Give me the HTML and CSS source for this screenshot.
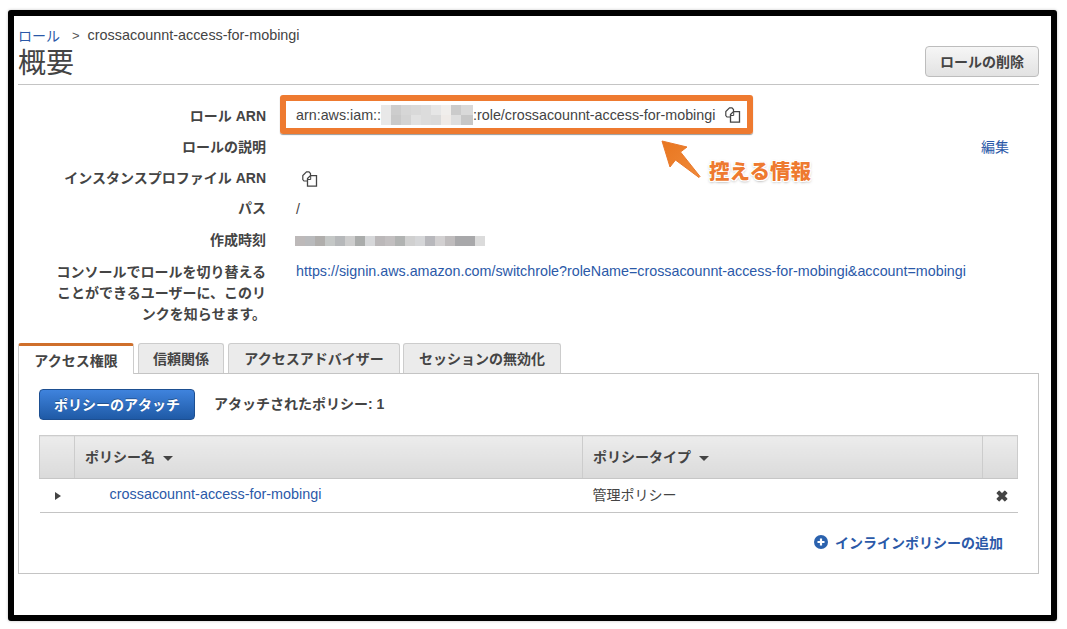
FILE: index.html
```html
<!DOCTYPE html>
<html lang="ja">
<head>
  <meta charset="UTF-8">
  <title>概要</title>
  <link rel="stylesheet" href="styles.css">
</head>
<body>
  <svg class="defs" width="0" height="0">
    <symbol id="copy" viewBox="0 0 16 16">
      <path d="M8.500 4.500V2.500L7 .8H4.500L.8 4.500v4l1.200 1.500h3" fill="none" stroke="#444" stroke-width="1.200"/>
      <path d="M5.500 7.500L8.500 4.600h6v10.600h-9z" fill="#fff" stroke="#444" stroke-width="1.300"/>
      <path d="M5.500 8.500h3.200V4.800" fill="none" stroke="#444" stroke-width="1"/>
    </symbol>
  </svg>

  <div class="frame">
    <header class="page-head">
      <div>
        <nav class="crumbs"><a href="#">ロール</a><span class="crumb-sep">&gt;</span><span>crossacounnt-access-for-mobingi</span></nav>
        <h1>概要</h1>
      </div>
      <button class="btn" type="button">ロールの削除</button>
    </header>

    <section class="summary">
      <div class="row">
        <div class="label">ロール ARN</div>
        <div class="value">
          <span class="arn-box">arn:aws:iam::<span class="blur-id"></span>:role/crossacounnt-access-for-mobingi<svg class="copy-icon arn-copy"><use href="#copy"/></svg></span>
        </div>
      </div>
      <div class="row">
        <div class="label">ロールの説明</div>
        <div class="value value-edit"><a href="#">編集</a></div>
      </div>
      <div class="row">
        <div class="label">インスタンスプロファイル ARN</div>
        <div class="value"><svg class="copy-icon profile-copy"><use href="#copy"/></svg></div>
      </div>
      <div class="row row-path">
        <div class="label">パス</div>
        <div class="value">/</div>
      </div>
      <div class="row">
        <div class="label">作成時刻</div>
        <div class="value"><span class="blur-date"></span></div>
      </div>
      <div class="row row-tall">
        <div class="label">コンソールでロールを切り替える<br>ことができるユーザーに、このリ<br>ンクを知らせます。</div>
        <div class="value"><a href="#">https://signin.aws.amazon.com/switchrole?roleName=crossacounnt-access-for-mobingi&amp;account=mobingi</a></div>
      </div>

      <!-- 注釈 -->
      <div class="note">
        <svg class="note-arrow" width="46" height="42" viewBox="0 0 46 42">
          <defs>
            <linearGradient id="arrowFill" x1="0" y1="0" x2="1" y2="1">
              <stop offset="0" stop-color="#e8761f"/>
              <stop offset="1" stop-color="#f08a3a"/>
            </linearGradient>
          </defs>
          <path d="M2 2L27 8L20.500 13L40 37.500L39 38.500L15.500 21L10 28z" fill="url(#arrowFill)" stroke="#e9792c" stroke-width="1" stroke-linejoin="round"/>
        </svg>
        <span class="note-text">控える情報</span>
      </div>
    </section>

    <div class="tabs">
      <a class="tab tab-active" href="#">アクセス権限</a>
      <a class="tab" href="#">信頼関係</a>
      <a class="tab" href="#">アクセスアドバイザー</a>
      <a class="tab" href="#">セッションの無効化</a>
    </div>

    <section class="panel">
      <div class="panel-top">
        <button class="btn btn-primary" type="button">ポリシーのアタッチ</button>
        <span class="attached">アタッチされたポリシー: 1</span>
      </div>

      <table class="policies">
        <thead>
          <tr>
            <th class="col-toggle"></th>
            <th class="col-name">ポリシー名<i class="caret"></i></th>
            <th class="col-type">ポリシータイプ<i class="caret"></i></th>
            <th class="col-action"></th>
          </tr>
        </thead>
        <tbody>
          <tr>
            <td class="col-toggle"><i class="expander"></i></td>
            <td class="policy-link"><a href="#">crossacounnt-access-for-mobingi</a></td>
            <td class="policy-type">管理ポリシー</td>
            <td class="col-action">
              <svg width="14" height="14" viewBox="0 0 12 12"><path d="M1.800 3.600L3.600 1.800 6 4.200 8.400 1.800 10.200 3.600 7.800 6 10.200 8.400 8.400 10.200 6 7.800 3.600 10.200 1.800 8.400 4.200 6z" fill="#444" stroke="#444" stroke-width="1" stroke-linejoin="round"/></svg>
            </td>
          </tr>
        </tbody>
      </table>

      <div class="panel-foot">
        <a class="add-link" href="#">
          <svg width="14" height="14" viewBox="0 0 14 14"><circle cx="7" cy="7" r="7" fill="#2b62ae"/><path d="M3.500 7h7M7 3.500v7" stroke="#fff" stroke-width="2.200"/></svg>
          インラインポリシーの追加
        </a>
      </div>
    </section>
  </div>
</body>
</html>
```

FILE: styles.css
```css
:root {
  --text: #444;
  --link: #2b59a8;
  --line: #c4c4c4;
  --orange: #ee7a30;
  font-family: "Liberation Sans", "Noto Sans CJK JP", sans-serif;
  color: var(--text);
}

* {
  box-sizing: border-box;
}

body {
  margin: 0;
  padding: 10px 10px 8px 8px;
  background: #fff;
  font-size: 14px;
}

a {
  color: var(--link);
  text-decoration: none;
}

.defs {
  position: absolute;
}

.frame {
  height: 611px;
  border: 6px solid #000;
  border-radius: 3px;
  box-shadow: 0 0 3px rgba(0, 0, 0, 0.25);
  padding: 0 12px 0 4px;
  background: #fff;
}

/* ヘッダー */
.page-head {
  display: flex;
  justify-content: space-between;
  align-items: flex-end;
  height: 69px;
  padding-bottom: 7px;
  border-bottom: 1px solid var(--line);
}

.crumbs {
  display: flex;
  align-items: center;
  height: 20px;
  margin-top: 10px;
  font-size: 14.400px;
}

.crumbs a {
  font-size: 14px;
}

.crumb-sep {
  margin: 0 8px 0 12px;
  color: #555;
  font-size: 13px;
}

h1 {
  margin: 2px 0 -3px;
  font-size: 28px;
  font-weight: 400;
  line-height: 33px;
  color: #444;
}

.btn {
  height: 31px;
  padding: 0 14px 2px;
  border: 1px solid #bdbdbd;
  border-radius: 4px;
  background: linear-gradient(#f6f6f6, #e2e2e2);
  color: #444;
  font: bold 14px "Liberation Sans", "Noto Sans CJK JP", sans-serif;
}

.btn-primary {
  width: 156px;
  padding: 0 0 2px;
  border-color: #1d4f91;
  background: linear-gradient(#3f83dd, #1f5aa6);
  color: #fff;
  text-shadow: 0 -1px 0 rgba(0, 0, 0, 0.3);
}

/* 概要 */
.summary {
  position: relative;
  height: 258px;
  padding-top: 16px;
}

.row {
  display: flex;
  align-items: center;
  height: 31px;
}

.row-path > div {
  margin-top: -2px;
}

.row-tall {
  align-items: flex-start;
  height: auto;
  padding-top: 6px;
}

.label {
  flex: 0 0 248px;
  margin-right: 30px;
  font-size: 14px;
  font-weight: bold;
  text-align: right;
  line-height: 21px;
}

.value {
  flex: 1;
  font-size: 14.300px;
  padding-right: 30px;
}

.row-tall .value {
  padding-top: 1px;
}

.value-edit {
  margin-top: -4px;
  font-size: 14px;
  text-align: right;
}

.arn-box {
  display: inline-flex;
  align-items: center;
  width: 473px;
  height: 39px;
  margin: -6px 0 -2px -16px;
  padding: 0 0 0 10px;
  border: 6px solid var(--orange);
  border-radius: 3px;
  box-shadow: 0 1px 1px rgba(0, 0, 0, 0.4);
  white-space: nowrap;
}

.blur-id {
  flex: 0 0 92px;
  height: 20px;
  background:
    linear-gradient(90deg, #e8e8e8 0 10px, #cdcdcd 10px 20px, #d6d6d6 20px 30px, #d9d9d9 30px 40px, #dcdcdc 40px 50px, #e6e6e6 50px 60px, #f0eeec 60px 70px, #cbcbcb 70px 80px, #d9d9d9 80px 92px) 0 0 / 100% 10px no-repeat,
    linear-gradient(90deg, #e8e8e8 0 10px, #c9c9c9 10px 20px, #d3d3d3 20px 30px, #e1e1e1 30px 40px, #dcdcdc 40px 50px, #dadada 50px 60px, #efebe8 60px 70px, #dedede 70px 80px, #c7c7c7 80px 92px) 0 10px / 100% 10px no-repeat;
}

.blur-date {
  display: block;
  width: 190px;
  height: 10px;
  margin-left: -1px;
  background: linear-gradient(90deg, #bdb9b9 0 10px, #b9babc 10px 20px, #b0aeac 20px 30px, #c4c7c6 30px 40px, #b6b8ba 40px 50px, #cdcdcd 50px 60px, #aaacab 60px 70px, #d6d7d9 70px 80px, #bbb8b9 80px 90px, #c2bfc0 90px 100px, #b1b3b2 100px 110px, #d0d0d0 110px 120px, #d5d6d8 120px 130px, #b8b8bc 130px 140px, #d2d0d1 140px 150px, #bfbcbd 150px 160px, #a8a8aa 160px 180px, #dbdbdb 180px 190px);
}

.copy-icon {
  display: block;
  width: 16px;
  height: 16px;
}

.arn-copy {
  margin-left: 10px;
}

.profile-copy {
  margin-left: 6px;
}

/* 注釈 */
.note {
  position: absolute;
  left: 642px;
  top: 54px;
  width: 160px;
  height: 50px;
}

.note-arrow {
  position: absolute;
  left: 0;
  top: 0;
}

.note-text {
  position: absolute;
  left: 49px;
  top: 20px;
  font-size: 20.500px;
  font-weight: 900;
  line-height: 26px;
  color: var(--orange);
  white-space: nowrap;
  text-shadow: 1px 0 0 #fff, -1px 0 0 #fff, 0 1px 0 #fff, 0 -1px 0 #fff, 1px 1px 0 #fff, -1px -1px 0 #fff, 1px -1px 0 #fff, -1px 1px 0 #fff, 0 1px 3px rgba(0, 0, 0, 0.5);
}

/* タブ */
.tabs {
  display: flex;
  align-items: flex-end;
  height: 30px;
}

.tab {
  display: flex;
  align-items: center;
  justify-content: center;
  width: 86px;
  height: 30px;
  margin-right: 4px;
  padding-bottom: 1px;
  border: 1px solid #ccc;
  border-bottom: 0;
  border-radius: 3px 3px 0 0;
  background: #ebebeb;
  color: #444;
  font-size: 14px;
  font-weight: bold;
}

.tab:nth-child(3) {
  width: 172px;
  margin-right: 3px;
}

.tab:nth-child(4) {
  width: 158px;
}

.tab-active {
  position: relative;
  z-index: 1;
  width: 116px;
  height: 31px;
  margin-bottom: -1px;
  border-top: 3px solid #cf6f2b;
  background: #fff;
}

.panel {
  height: 201px;
  border: 1px solid var(--line);
  padding: 0 20px;
}

.panel-top {
  display: flex;
  align-items: center;
  gap: 19px;
  padding-top: 15px;
}

.attached {
  margin-top: -3px;
  font-size: 14px;
  font-weight: bold;
}

.policies {
  width: 978px;
  margin-top: 15px;
  border-collapse: collapse;
  table-layout: fixed;
  font-size: 14px;
}

.policies th {
  height: 43px;
  padding: 0 10px 2px;
  border: 1px solid #ccc;
  border-bottom-color: #c6c6c6;
  background: linear-gradient(#ececec, #dadada);
  font-weight: bold;
  text-align: left;
}

.policies td {
  height: 34px;
  padding: 0 10px 4px;
  border-bottom: 1px solid var(--line);
}

.col-toggle {
  width: 35px;
}

.col-name {
  width: 508px;
}

.col-type {
  width: 400px;
}

.col-action {
  width: 35px;
}

td.col-action svg {
  display: block;
  margin: 2px 0 0 2px;
}

.policies td.col-toggle {
  padding: 0 0 0 15px;
}

.policies td.policy-link {
  padding-left: 35px;
  font-size: 14.400px;
}

.policies td.col-action {
  padding-bottom: 2px;
}

.caret {
  display: inline-block;
  margin-left: 8px;
  vertical-align: middle;
  border-top: 5px solid #444;
  border-left: 5px solid transparent;
  border-right: 5px solid transparent;
}

.expander {
  display: block;
  width: 0;
  border-left: 6px solid #444;
  border-top: 4.500px solid transparent;
  border-bottom: 4.500px solid transparent;
}

.panel-foot {
  display: flex;
  justify-content: flex-end;
  padding: 19px 15px 0 0;
}

.add-link {
  display: flex;
  align-items: center;
  gap: 7px;
  font-size: 14px;
  font-weight: bold;
}
```
